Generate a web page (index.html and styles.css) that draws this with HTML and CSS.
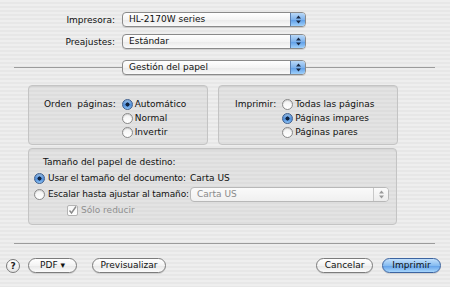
FILE: index.html
```html
<!DOCTYPE html>
<html lang="es">
<head>
    <meta charset="UTF-8">
    <title>Imprimir</title>
    <link rel="stylesheet" href="styles.css">
</head>
<body>
    <div class="sheet">
        <div class="field-row">
            <span class="field-label">Impresora:</span>
            <div class="popup"><span class="popup-text">HL-2170W series</span><span class="popup-cap"><svg width="7" height="9" viewBox="0 0 7 9"><path d="M3.5 0.5 L6 3.5 L1 3.5 Z M3.5 8.5 L6 5.5 L1 5.5 Z" fill="#1a2a44"/></svg></span></div>
        </div>
        <div class="field-row">
            <span class="field-label">Preajustes:</span>
            <div class="popup"><span class="popup-text">Estándar</span><span class="popup-cap"><svg width="7" height="9" viewBox="0 0 7 9"><path d="M3.5 0.5 L6 3.5 L1 3.5 Z M3.5 8.5 L6 5.5 L1 5.5 Z" fill="#1a2a44"/></svg></span></div>
        </div>
        <div class="pane-row">
            <span class="rule rule-left"></span>
            <div class="popup"><span class="popup-text">Gestión del papel</span><span class="popup-cap"><svg width="7" height="9" viewBox="0 0 7 9"><path d="M3.5 0.5 L6 3.5 L1 3.5 Z M3.5 8.5 L6 5.5 L1 5.5 Z" fill="#1a2a44"/></svg></span></div>
            <span class="rule"></span>
        </div>

        <div class="groups">
            <div class="group group-order">
                <span class="group-label">Orden&nbsp; páginas:</span>
                <div class="options">
                    <label class="option"><span class="radio on"></span>Automático</label>
                    <label class="option"><span class="radio"></span>Normal</label>
                    <label class="option"><span class="radio"></span>Invertir</label>
                </div>
            </div>
            <div class="group group-print">
                <span class="group-label">Imprimir:</span>
                <div class="options">
                    <label class="option"><span class="radio"></span>Todas las páginas</label>
                    <label class="option"><span class="radio on"></span>Páginas impares</label>
                    <label class="option"><span class="radio"></span>Páginas pares</label>
                </div>
            </div>
        </div>

        <div class="group group-size">
            <div class="size-title">Tamaño del papel de destino:</div>
            <div class="size-row">
                <span class="radio on"></span>
                <span class="size-label">Usar el tamaño del documento:</span>
                <span>Carta US</span>
            </div>
            <div class="size-row">
                <span class="radio"></span>
                <span class="size-label">Escalar hasta ajustar al tamaño:</span>
                <div class="popup popup-off"><span class="popup-text">Carta US</span><span class="popup-cap"><svg width="7" height="9" viewBox="0 0 7 9"><path d="M3.5 0.5 L6 3.5 L1 3.5 Z M3.5 8.5 L6 5.5 L1 5.5 Z" fill="#9a9a9a"/></svg></span></div>
            </div>
            <div class="size-row check-row">
                <span class="checkbox"><svg width="9" height="9" viewBox="0 0 9 9"><path d="M1.5 4.5 L3.5 7 L8 0.5" stroke="#8a8a8a" stroke-width="1.4" fill="none"/></svg></span>
                <span class="muted">Sólo reducir</span>
            </div>
        </div>

        <div class="bottom-rule"></div>

        <div class="buttons">
            <span class="help">?</span>
            <button class="btn btn-pdf">PDF ▾</button>
            <button class="btn btn-preview">Previsualizar</button>
            <span class="spacer"></span>
            <button class="btn btn-cancel">Cancelar</button>
            <button class="btn btn-default">Imprimir</button>
        </div>
    </div>
</body>
</html>
```

FILE: styles.css
```css
body {
    margin: 0;
    width: 450px;
    height: 287px;
    overflow: hidden;
    font-family: 'DejaVu Sans', sans-serif;
    font-size: 9px;
    color: #111;
    background: repeating-linear-gradient(to bottom, #eeeeee 0, #eeeeee 2px, #e7e7e7 2px, #e7e7e7 4px);
}

.sheet {
    padding-top: 12px;
}

.field-row {
    display: flex;
    align-items: center;
    height: 15px;
    margin-bottom: 7px;
}

.field-label {
    width: 115px;
    text-align: right;
    padding-right: 7px;
}

.popup {
    display: flex;
    align-items: stretch;
    flex-shrink: 0;
    width: 184px;
    height: 15px;
    box-sizing: border-box;
    border: 1px solid #8a8a8a;
    border-radius: 4px;
    background: linear-gradient(to bottom, #ffffff 0%, #f4f4f4 50%, #e9e9e9 51%, #fafafa 100%);
    box-shadow: 0 1px 0 rgba(0, 0, 0, 0.12);
    overflow: hidden;
}

.popup-text {
    flex: 1;
    padding-left: 6px;
    line-height: 13px;
    white-space: nowrap;
}

.popup-cap {
    width: 14px;
    display: flex;
    align-items: center;
    justify-content: center;
    border-left: 1px solid #5a7fb0;
    background: linear-gradient(to bottom, #b9d8f7 0%, #7eb2ec 50%, #5b9be6 51%, #9fd0fb 100%);
}

.pane-row {
    display: flex;
    align-items: center;
    padding: 0 15px 0 14px;
    margin-top: 11px;
}

.rule {
    flex: 1;
    height: 1px;
    background: #9c9c9c;
}

.rule-left {
    flex: 0 0 108px;
}

.groups {
    display: flex;
    gap: 10px;
    padding-left: 28px;
    margin-top: 10px;
}

.group {
    box-sizing: border-box;
    border: 1px solid #c4c4c4;
    border-radius: 4px;
    background: rgba(0, 0, 0, 0.045);
    box-shadow: inset 0 1px 1px rgba(0, 0, 0, 0.06);
}

.group-order,
.group-print {
    display: flex;
    width: 180px;
    height: 60px;
    padding-top: 11px;
}

.group-order {
    padding-left: 15px;
}

.group-print {
    padding-left: 16px;
}

.group-label {
    line-height: 14px;
    padding-right: 6px;
}

.options {
    display: flex;
    flex-direction: column;
}

.option {
    display: flex;
    align-items: center;
    height: 14px;
    gap: 2px;
}

.radio {
    width: 11px;
    height: 11px;
    box-sizing: border-box;
    border-radius: 50%;
    border: 1px solid #8a8a8a;
    background: linear-gradient(to bottom, #f2f2f2, #ffffff);
    box-shadow: inset 0 1px 1px rgba(0, 0, 0, 0.15);
    flex-shrink: 0;
}

.radio.on {
    border-color: #3e5f8f;
    background: radial-gradient(circle at 50% 50%, #10233f 0, #10233f 1.8px, transparent 2.3px),
                linear-gradient(to bottom, #9fc9f3, #4f8edc 55%, #8cc2f4);
}

.group-size {
    width: 369px;
    height: 77px;
    margin: 3px 0 0 28px;
    padding: 5px 0 0 5px;
}

.size-title {
    height: 16px;
    line-height: 16px;
    padding-left: 9px;
}

.size-row {
    display: flex;
    align-items: center;
    height: 16px;
    white-space: nowrap;
}

.size-label {
    flex: 0 0 145px;
    padding-left: 3px;
    box-sizing: border-box;
    letter-spacing: -0.15px;
}

.popup-off {
    width: 199px;
    border-color: #b8b8b8;
    color: #8a8a8a;
    background: linear-gradient(to bottom, #fafafa, #f0f0f0);
    box-shadow: none;
}

.popup-off .popup-cap {
    border-left-color: #c8c8c8;
    background: linear-gradient(to bottom, #fbfbfb, #ececec);
}

.check-row {
    padding-left: 33px;
}

.checkbox {
    width: 11px;
    height: 11px;
    box-sizing: border-box;
    border: 1px solid #b4b4b4;
    border-radius: 2px;
    background: linear-gradient(to bottom, #f6f6f6, #ffffff);
    display: flex;
    align-items: center;
    justify-content: center;
    margin-right: 3px;
}

.muted {
    color: #8f8f8f;
}

.bottom-rule {
    height: 1px;
    background: #9c9c9c;
    margin: 18px 15px 0 14px;
}

.buttons {
    display: flex;
    align-items: center;
    padding: 0 9px 0 6px;
    margin-top: 14px;
}

.help {
    width: 14px;
    height: 14px;
    box-sizing: border-box;
    border: 1px solid #7a7a7a;
    border-radius: 50%;
    background: linear-gradient(to bottom, #ffffff, #e4e4e4);
    font-size: 9px;
    font-weight: bold;
    line-height: 12px;
    text-align: center;
    color: #222;
}

.btn {
    height: 15px;
    padding: 0;
    box-sizing: border-box;
    border: 1px solid #7c7c7c;
    border-radius: 8px;
    background: linear-gradient(to bottom, #ffffff 0%, #f3f3f3 50%, #e6e6e6 51%, #fcfcfc 100%);
    box-shadow: 0 1px 0 rgba(0, 0, 0, 0.12);
    font-family: 'DejaVu Sans', sans-serif;
    font-size: 9px;
    line-height: 13px;
    color: #111;
    text-align: center;
}

.btn-pdf {
    width: 49px;
    margin-left: 8px;
}

.btn-preview {
    width: 74px;
    margin-left: 15px;
}

.spacer {
    flex: 1;
}

.btn-cancel {
    width: 57px;
}

.btn-default {
    width: 59px;
    margin-left: 9px;
    border-color: #3c64a0;
    background: linear-gradient(to bottom, #c3e0fb 0%, #86bcf1 50%, #5f9ee8 51%, #a7d6fc 100%);
}
```
